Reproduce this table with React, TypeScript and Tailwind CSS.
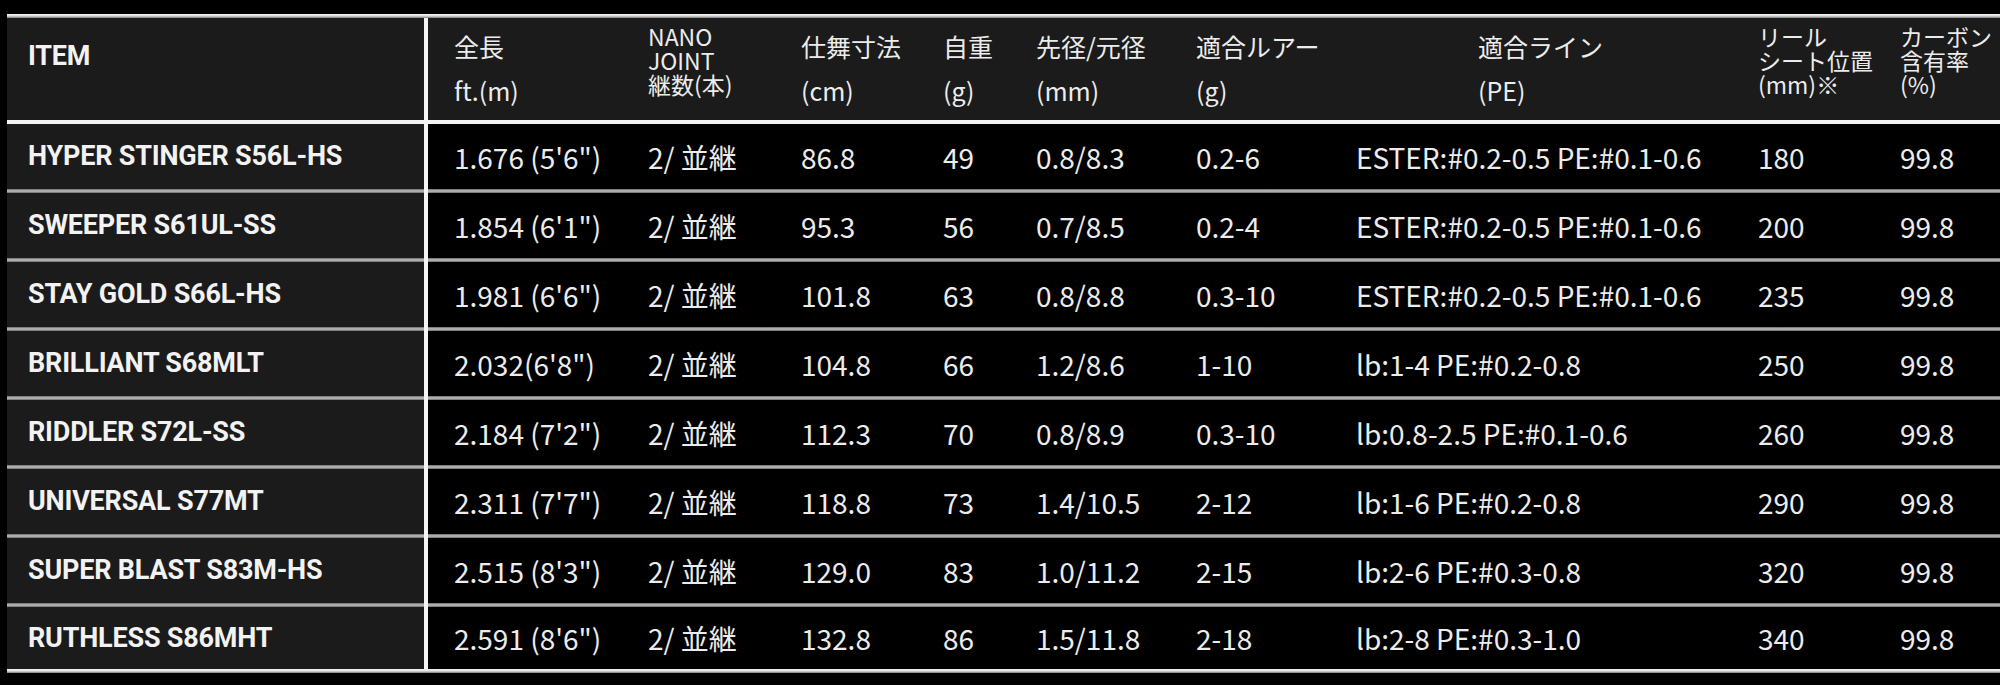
const rows = [
  ['HYPER STINGER S56L-HS', '1.676 (5\'6")', '2/ 並継', '86.8', '49', '0.8/8.3', '0.2-6', 'ESTER:#0.2-0.5 PE:#0.1-0.6', '180', '99.8'],
  ['SWEEPER S61UL-SS', '1.854 (6\'1")', '2/ 並継', '95.3', '56', '0.7/8.5', '0.2-4', 'ESTER:#0.2-0.5 PE:#0.1-0.6', '200', '99.8'],
  ['STAY GOLD S66L-HS', '1.981 (6\'6")', '2/ 並継', '101.8', '63', '0.8/8.8', '0.3-10', 'ESTER:#0.2-0.5 PE:#0.1-0.6', '235', '99.8'],
  ['BRILLIANT S68MLT', '2.032(6\'8")', '2/ 並継', '104.8', '66', '1.2/8.6', '1-10', 'lb:1-4 PE:#0.2-0.8', '250', '99.8'],
  ['RIDDLER S72L-SS', '2.184 (7\'2")', '2/ 並継', '112.3', '70', '0.8/8.9', '0.3-10', 'lb:0.8-2.5 PE:#0.1-0.6', '260', '99.8'],
  ['UNIVERSAL S77MT', '2.311 (7\'7")', '2/ 並継', '118.8', '73', '1.4/10.5', '2-12', 'lb:1-6 PE:#0.2-0.8', '290', '99.8'],
  ['SUPER BLAST S83M-HS', '2.515 (8\'3")', '2/ 並継', '129.0', '83', '1.0/11.2', '2-15', 'lb:2-6 PE:#0.3-0.8', '320', '99.8'],
  ['RUTHLESS S86MHT', '2.591 (8\'6")', '2/ 並継', '132.8', '86', '1.5/11.8', '2-18', 'lb:2-8 PE:#0.3-1.0', '340', '99.8'],
]

// header cells: lines + whether it is a tight 3-line block
const heads: { lines: string[]; tight?: boolean; pad?: string }[] = [
  { lines: ['全長', 'ft.(m)'], pad: 'pl-[26px]' },
  { lines: ['NANO', 'JOINT', '継数(本)'], tight: true },
  { lines: ['仕舞寸法', '(cm)'] },
  { lines: ['自重', '(g)'] },
  { lines: ['先径/元径', '(mm)'] },
  { lines: ['適合ルアー', '(g)'] },
  { lines: ['適合ライン', '(PE)'], pad: 'pl-[122px]' },
  { lines: ['リール', 'シート位置', '(mm)※'], tight: true },
  { lines: ['カーボン', '含有率', '(%)'], tight: true },
]

const grid = 'grid grid-cols-[417px_4px_220px_153px_142px_93px_160px_160px_402px_142px_1fr]'
const nameFont = "font-['Roboto','Liberation_Sans',sans-serif] font-bold text-[27px] text-[#f2f2f2] tracking-[-0.2px]"
const dataFont = "font-['Noto_Sans_CJK_JP','Noto_Sans',sans-serif] text-[#ececec]"

function Separator() {
  return (
    <div className="flex h-[4px]">
      <div className="w-[417px] bg-linear-to-b from-[#6a6a6a] via-[#c4c4c4] to-[#6a6a6a]" />
      <div className="w-[4px] bg-[#f4f4f4]" />
      <div className="flex-1 bg-linear-to-b from-[#6a6a6a] via-[#c4c4c4] to-[#6a6a6a]" />
    </div>
  )
}

export default function App() {
  return (
    <div className="w-[2000px] h-[685px] bg-black overflow-hidden pt-[14px] pl-[7px]">
      <div className="h-[4px] bg-linear-to-b from-[#f2f2f2] via-[#dcdcdc] to-[#7a7a7a]" />

      <div className={`${grid} h-[102px] bg-[#1b1b1b]`}>
        <div className={`${nameFont} pl-[21px] pt-[23px] leading-[30px]`}>ITEM</div>
        <div className="bg-[#f4f4f4]" />
        {heads.map((h, i) => (
          <div
            key={i}
            className={`${dataFont} ${h.pad ?? ''} ${h.tight ? 'pt-[6px] text-[23px] leading-[24px]' : 'pt-[6px] text-[25px] leading-[44px]'}`}
          >
            {h.lines.map((l, j) => (
              <div key={j} className="whitespace-nowrap">{l}</div>
            ))}
          </div>
        ))}
      </div>
      <div className="h-[4px] bg-[#f4f4f4]" />

      {rows.map((r, i) => (
        <div key={i}>
          <div className={`${grid} ${i === rows.length - 1 ? 'h-[62px]' : 'h-[65px]'}`}>
            <div className={`${nameFont} bg-[#1b1b1b] pl-[21px] flex items-center whitespace-nowrap`}>{r[0]}</div>
            <div className="bg-[#f4f4f4]" />
            {r.slice(1).map((c, j) => (
              <div
                key={j}
                className={`${dataFont} text-[28px] flex items-center whitespace-nowrap ${j === 0 ? 'pl-[26px]' : ''}`}
              >
                {c}
              </div>
            ))}
          </div>
          {i < rows.length - 1 && <Separator />}
        </div>
      ))}
      <div className="h-[4px] bg-linear-to-b from-[#f2f2f2] via-[#e0e0e0] to-[#7a7a7a]" />
    </div>
  )
}
